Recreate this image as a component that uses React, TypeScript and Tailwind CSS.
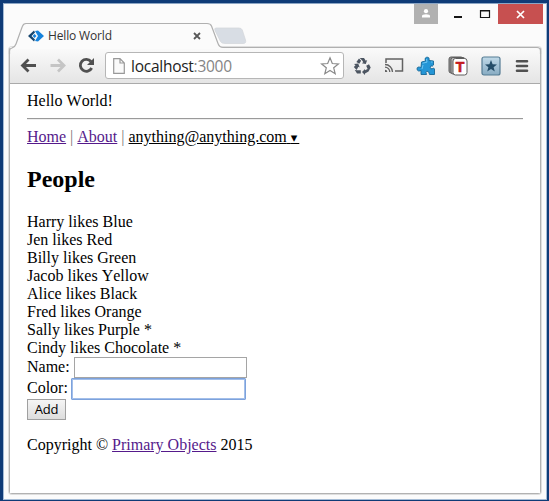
import React from "react";

const people: string[] = [
  "Harry likes Blue",
  "Jen likes Red",
  "Billy likes Green",
  "Jacob likes Yellow",
  "Alice likes Black",
  "Fred likes Orange",
  "Sally likes Purple *",
  "Cindy likes Chocolate *",
];

function TabShape() {
  return (
    <svg className="absolute left-0 top-0 z-10" width="543" height="50" viewBox="0 0 543 50">
      <path
        d="M6.500 46 Q6.500 44.500 8 44 Q11 43 12 40 L18.300 22.500 Q19.300 19.500 22 19.500 H203 Q206.500 19.500 207.500 22 L214.500 40 Q216 43.500 220 43.500 V45 H7 Z"
        fill="#fbfbfb"
      />
      <path
        d="M5.500 50 V47 Q5.500 44.500 8 44 Q11 43 12 40 L18.300 22.500 Q19.300 19.500 22 19.500 H203 Q206.500 19.500 207.500 22 L214 39.500 Q215.500 43.500 219 43.500 H533 Q536.500 43.500 536.500 47 V50"
        fill="none"
        stroke="#b0b0b0"
        strokeWidth="1.200"
      />
      <path
        d="M212 24 H235 Q237.500 24 238.300 26 L241.500 36 Q242.500 39.500 239 39.500 H221 Q217.500 39.500 216.500 37.500 L211 26.500 Q210 24 212 24 Z"
        fill="#d8dde4"
        stroke="#d3d6da"
        strokeWidth="0.700"
      />
    </svg>
  );
}

function Favicon() {
  return (
    <svg width="16" height="12" viewBox="0 0 16 12">
      <path d="M6 .5 L0 6 L6 11.500 L7 9.500 L3.500 6 L7 2.500 Z" fill="#17466f" />
      <path d="M6.500 4 L4.700 6 L6.500 8 L8.500 6 Z" fill="#1683dc" />
      <path d="M7 1 L10 .5 L16 6 L10 11.500 L7 11 L8.500 8.500 L10 6 L8.500 3.500 Z" fill="#1683dc" />
    </svg>
  );
}

function TitleBar() {
  return (
    <div className="relative flex h-[43px] items-start">
      <TabShape />
      <div className="relative z-20 ml-[24px] mt-[24px] flex h-[16px] w-[173px] items-center">
        <Favicon />
        <span className="ml-[4px] whitespace-nowrap font-['Open_Sans',sans-serif] text-[12px] leading-[16px] tracking-[-0.150px] text-[#333]">
          Hello World
        </span>
        <svg className="ml-auto" width="8" height="8" viewBox="0 0 8 8">
          <path d="M1 1 L7 7 M7 1 L1 7" stroke="#585858" strokeWidth="1.800" />
        </svg>
      </div>
      <div className="ml-auto mr-[3px] flex h-[20px]">
        <div className="flex w-[24px] justify-center bg-[#b1b1b1] pt-[5px]">
          <svg width="10" height="9" viewBox="0 0 10 9">
            <circle cx="5" cy="2.200" r="2.100" fill="#fff" />
            <path d="M1 8.500 V7 Q1 5.200 5 5.200 Q9 5.200 9 7 V8.500 Z" fill="#fff" />
          </svg>
        </div>
        <svg width="60" height="20" viewBox="0 0 60 20">
          <path d="M16 13 H24" stroke="#161616" strokeWidth="2" />
          <path d="M42.500 6.500 H51.500 V13.500 H42.500 Z M42 7 H52" fill="none" stroke="#161616" strokeWidth="1.200" />
        </svg>
        <div className="flex w-[45px] justify-center bg-[#c75050] pt-[6px]">
          <svg width="9" height="9" viewBox="0 0 9 9">
            <path d="M1 1 L8 8 M8 1 L1 8" stroke="#fff" strokeWidth="1.700" />
          </svg>
        </div>
      </div>
    </div>
  );
}

function NavIcons() {
  return (
    <svg width="94" height="35" viewBox="0 0 94 35">
      <g fill="none" strokeWidth="2.800">
        <path d="M12.500 17.500 H26 M18.500 11.500 L12.500 17.500 L18.500 23.500" stroke="#505050" />
        <path d="M40.500 17.500 H54 M48 11.500 L54 17.500 L48 23.500" stroke="#c5c5c5" />
        <path d="M81 13.500 A6 6 0 1 0 81.700 20" stroke="#505050" />
      </g>
      <path d="M84 10 V17 H77 Z" fill="#505050" />
    </svg>
  );
}

function RecycleIcon() {
  return (
    <svg width="18" height="18" viewBox="0 0 18 18" fill="#4c5561">
      <path d="M6.700 1 H11 L12.800 3.800 L14.200 3 L12.800 7 L8.800 6.300 L10.300 5.300 L9 3.300 Z" />
      <path d="M6 1.500 L8.200 3.800 L6.300 6.800 L3.400 5.100 Z" />
      <path d="M1 7 L5.200 6.600 L6.700 10.500 L5.400 9.700 L3.600 13 L.8 10 L2.500 8.200 Z" />
      <path d="M1.800 13 L4 13.300 H7.800 V16.600 H4 Z" />
      <path d="M13.200 8.800 L16 7.200 L17.700 10.500 L15.500 14.500 L12 16.500 V18 L9 15 L12 11.900 V13.200 L14.600 12 Z" />
    </svg>
  );
}

function CastIcon() {
  return (
    <svg width="20" height="17" viewBox="0 0 20 17" fill="none" stroke="#626262">
      <path d="M2 6 V2 H18.500 V14 H11" strokeWidth="1.500" />
      <path d="M1 7.500 A7.500 7.500 0 0 1 8.500 15 M1 10.200 A4.800 4.800 0 0 1 5.800 15" strokeWidth="1.300" />
      <path d="M1 12.700 A2.300 2.300 0 0 1 3.300 15 H1 Z" fill="#626262" stroke="none" />
    </svg>
  );
}

function PuzzleIcon() {
  return (
    <svg width="20" height="20" viewBox="0 0 20 20">
      <path
        d="M5.500 6 L9.500 5 Q8 2 10.500 1.300 Q13.800 .7 13 4.500 L17.500 5 V9 Q16.500 10.800 15 9.800 Q13.500 11.300 15 12.800 Q16.300 13 17.500 12 L18.500 13 V18.500 H13.500 Q13.300 17 12.300 15.500 Q10.300 14.500 10 16.500 L10.500 18.500 H5 V14.500 Q1.500 16 1 13 Q1 10 5 11.500 Z"
        fill="#2596d6"
        stroke="#176896"
        strokeWidth="0.900"
      />
      <path d="M6.500 7.200 L11 6.200 L10.500 3 M6 13 L7 9 M15 6 H16.500" fill="none" stroke="#6dc5f2" strokeWidth="1" />
    </svg>
  );
}

function LetterCards() {
  return (
    <div className="relative h-[20px] w-[20px]">
      <svg className="absolute inset-0" width="20" height="20" viewBox="0 0 20 20" stroke="#5d5d5d">
        <rect x="1" y="1" width="14" height="16" rx="2" fill="#939393" />
        <rect x="3" y="1.500" width="14" height="16.500" rx="2" fill="#bcbcbc" />
        <rect x="5" y="2.500" width="14" height="16.500" rx="2.500" fill="#fff" />
      </svg>
      <span className="absolute left-[5px] top-[3px] w-[14px] text-center font-['Liberation_Sans',sans-serif] text-[14px] font-bold leading-[16px] text-[#c41a20] [-webkit-text-stroke:0.700px_#c41a20]">
        T
      </span>
    </div>
  );
}

function StarBox() {
  return (
    <svg width="20" height="20" viewBox="0 0 20 20">
      <defs>
        <linearGradient id="starbox" x1="0" y1="0" x2="0" y2="1">
          <stop offset="0" stopColor="#c0d9e8" />
          <stop offset="1" stopColor="#87abc2" />
        </linearGradient>
      </defs>
      <rect x="1" y="1" width="18" height="18" rx="2" fill="url(#starbox)" stroke="#557c94" strokeWidth="1.200" />
      <path
        d="M10 4 L11.600 8.200 L16 8.400 L12.600 11.200 L13.800 15.500 L10 13 L6.200 15.500 L7.400 11.200 L4 8.400 L8.400 8.200 Z"
        fill="#244d68"
      />
    </svg>
  );
}

function Toolbar() {
  return (
    <div className="flex h-[36px] items-center border-b border-[#aaaaaa] bg-gradient-to-b from-[#fafafa] to-[#e5e5e5]">
      <NavIcons />
      <div className="ml-px flex h-[27px] w-[239px] shrink-0 items-center rounded-[3px] border border-[#b6b6b6] bg-white pl-[7px] pr-[3px]">
        <svg width="12" height="16" viewBox="0 0 12 16">
          <path d="M.7 .7 H7 L11.300 5 V15.300 H.7 Z M7 .7 V5 H11.300" fill="#fafafa" stroke="#999" strokeWidth="1.200" />
        </svg>
        <span className="ml-[6px] whitespace-nowrap font-['Open_Sans',sans-serif] text-[15.500px] leading-[24px] tracking-[-0.260px] text-[#222]">
          localhost<span className="text-[#858585]">:3000</span>
        </span>
        <svg className="ml-auto" width="20" height="20" viewBox="0 0 20 20">
          <path
            d="M10 1.800 L12.300 7.500 L18.400 7.900 L13.700 11.800 L15.200 17.800 L10 14.500 L4.800 17.800 L6.300 11.800 L1.600 7.900 L7.700 7.500 Z"
            fill="#fff"
            stroke="#8a8a8a"
            strokeWidth="1.200"
          />
        </svg>
      </div>
      <div className="ml-[9px] flex items-center">
        <RecycleIcon />
        <div className="ml-[13px] flex"><CastIcon /></div>
        <div className="ml-[12px] flex"><PuzzleIcon /></div>
        <div className="ml-[12px] flex"><LetterCards /></div>
        <div className="ml-[13px] flex"><StarBox /></div>
        <svg className="ml-[14px]" width="14" height="14" viewBox="0 0 14 14">
          <path d="M2 2.300 H12 M2 7 H12 M2 11.700 H12" stroke="#515151" strokeWidth="2.600" strokeLinecap="round" />
        </svg>
      </div>
    </div>
  );
}

function Page() {
  return (
    <div className="flex-1 bg-white pl-[17px] pr-[17px] pt-[8px] font-['Liberation_Serif',serif] text-[16px] leading-[18px] text-black [font-kerning:none]">
      <div>Hello World!</div>
      <div className="my-[8px] h-[2px] border-t border-[#9a9a9a] bg-[#eee]" />
      <nav className="h-[18px] whitespace-nowrap">
        <a className="text-[#551a8b] underline">Home</a> <span className="text-[#777]">|</span>{" "}
        <a className="text-[#551a8b] underline">About</a> <span className="text-[#777]">|</span>{" "}
        <a className="underline">
          anything@anything.com{" "}
          <span className="font-['DejaVu_Sans',sans-serif] text-[13px] leading-none tracking-[2px]">▾</span>
        </a>
      </nav>
      <h2 className="mt-[20px] text-[24px] font-bold leading-[27px]">People</h2>
      <ul className="mt-[20px]">
        {people.map((person) => (
          <li key={person}>{person}</li>
        ))}
      </ul>
      <div className="flex h-[21px] items-start">
        <label className="w-[47px] pt-px">Name:</label>
        <input className="h-[21px] w-[173px] border border-[#a5a5a5] bg-white outline-none" />
      </div>
      <div className="flex h-[21px] items-start">
        <label className="w-[44px] pt-px">Color:</label>
        <input className="h-[22px] w-[175px] rounded-[1px] border border-[#7da2dc] bg-white shadow-[inset_0_0_0_1px_#a3bfea] outline-none" />
      </div>
      <button className="block h-[21px] w-[39px] border border-[#a0a0a0] bg-gradient-to-b from-[#f5f5f5] to-[#dddddd] font-['Open_Sans',sans-serif] text-[13px] leading-[19px] tracking-[-0.200px]">
        Add
      </button>
      <footer className="mt-[16px]">
        Copyright © <a className="text-[#551a8b] underline">Primary Objects</a> 2015
      </footer>
    </div>
  );
}

export default function App() {
  return (
    <div className="h-[501px] w-[549px] overflow-hidden bg-[#0f3b77] pb-px pl-[3px] pr-[2px] pt-[3px]">
      <div className="flex h-full flex-col border border-[#a5bcd6] border-t-[#8ba5c4] bg-[#fbfbfb]">
        <TitleBar />
        <div className="mb-[5px] ml-[5px] mr-[5px] flex flex-1 flex-col rounded-[3px] border border-[#b2b2b2] shadow-[0_0_0_1px_#dedede] [border-top-color:transparent]">
          <Toolbar />
          <Page />
        </div>
      </div>
    </div>
  );
}
